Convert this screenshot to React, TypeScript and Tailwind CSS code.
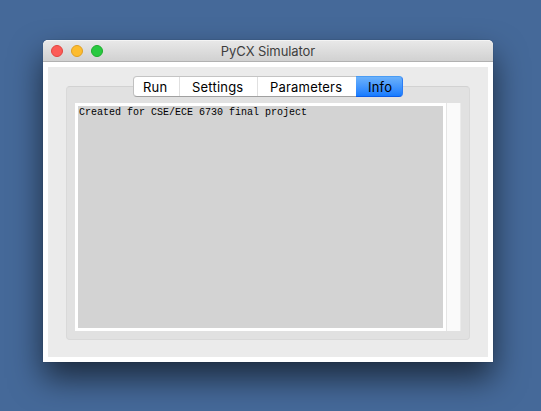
const trafficLights = [
  'bg-[#fc5b57] border-[#e2443f]',
  'bg-[#fdbc2e] border-[#e0a023]',
  'bg-[#28c940] border-[#1dad2c]',
];

const tabs = [
  { label: 'Run', cell: 'w-[45px] pl-[9px]' },
  { label: 'Settings', cell: 'w-[78px] pl-[12px] border-l border-[#e0e0e0]' },
  { label: 'Parameters', cell: 'w-[99px] pl-[12px] border-l border-[#e0e0e0]' },
];

export default function App() {
  return (
    <div className="flex h-[411px] w-[541px] overflow-hidden bg-[#456999] pt-[40px] pl-[43px] font-['Inter','Liberation_Sans',sans-serif] text-[13px]">
      <main className="flex h-[322px] w-[450px] flex-col rounded-t-[5px] bg-white shadow-[0_0_1px_rgba(0,0,0,0.5),0_16px_32px_rgba(0,0,0,0.6)]">
        <header className="grid h-[22px] shrink-0 grid-cols-[1fr_auto_1fr] items-center rounded-t-[5px] border-t border-b border-t-[#f4f4f4] border-b-[#b1b1b1] bg-linear-to-b from-[#e8e8e8] to-[#d1d1d1] px-2">
          <div className="flex gap-2">
            {trafficLights.map((c) => (
              <span key={c} className={`size-3 rounded-full border ${c}`} />
            ))}
          </div>
          <h1 className="pb-px leading-[18px] tracking-[-0.08px] text-[#3e3e3e]">PyCX Simulator</h1>
        </header>
        <div className="m-[5px] flex h-[290px] flex-col items-center bg-[#ebebeb] pt-[9px]">
          <nav className="z-10 flex h-[21px] w-[270px] shrink-0 leading-[21px] tracking-[0.2px] text-black">
            <div className="flex rounded-l-[4px] border-y border-l border-t-[#c4c4c4] border-b-[#a0a0a0] border-l-[#c0c0c0] bg-white">
              {tabs.map((t) => (
                <button key={t.label} className={`flex h-[19px] whitespace-nowrap ${t.cell}`}>
                  {t.label}
                </button>
              ))}
            </div>
            <button className="flex h-[21px] flex-1 rounded-r-[4px] border-y border-r border-t-[#4a9cf4] border-r-[#2b7df5] border-b-[#0a5ce8] bg-linear-to-b from-[#6bb1fa] to-[#147bff] pl-[12px]">
              Info
            </button>
          </nav>
          <section className="-mt-[11px] flex h-[254px] w-[404px] rounded-[4px] border border-[#d9d9d9] border-t-[#d2d2d2] bg-[#e1e1e1] pt-[16px] pl-[8px]">
            <div className="h-[228px] w-[371px] border-[3px] border-white bg-[#d3d3d3] pt-px pl-px font-['Liberation_Mono',monospace] text-[10px] leading-[12px] text-black">
              Created for CSE/ECE 6730 final project
            </div>
            <div className="h-[228px] w-[15px] border-x border-l-[#e5e5e5] border-r-[#ebebeb] bg-[#fafafa]" />
          </section>
        </div>
      </main>
    </div>
  );
}
